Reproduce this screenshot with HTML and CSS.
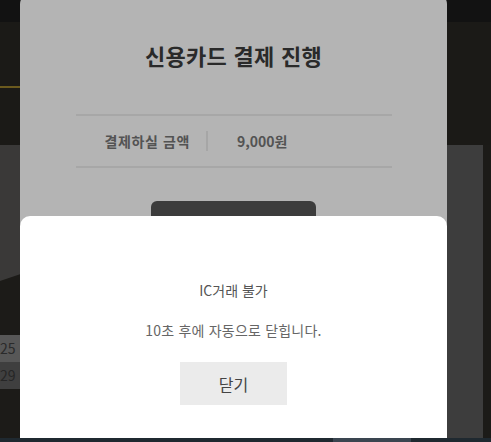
FILE: index.html
```html
<!DOCTYPE html>
<html lang="ko">
<head>
<meta charset="utf-8">
<title>신용카드 결제 진행</title>
<link rel="stylesheet" href="styles.css">
</head>
<body>
<div class="screen">
  <div class="topbar"></div>
  <div class="header"><div class="accent"></div></div>
  <div class="content">
    <div class="left-col">
      <div class="panel-gray"></div>
      <div class="num-row light">25</div>
      <div class="num-row">29</div>
    </div>
    <div class="center-col"></div>
    <div class="right-col"><div class="side-panel"></div></div>
  </div>
  <div class="bottombar"><div class="scroll-thumb"></div></div>

  <section class="sheet">
    <h2 class="sheet-title">신용카드 결제 진행</h2>
    <div class="info-row">
      <span class="info-label">결제하실 금액</span>
      <span class="info-divider"></span>
      <span class="info-value">9,000원</span>
    </div>
    <div class="sheet-button"></div>
  </section>

  <section class="alert">
    <p class="alert-msg">IC거래 불가</p>
    <p class="alert-sub">10초 후에 자동으로 닫힙니다.</p>
    <button class="alert-btn" type="button">닫기</button>
  </section>
</div>
</body>
</html>
```

FILE: styles.css
```css
html, body {
  margin: 0;
  padding: 0;
}
body {
  width: 491px;
  height: 442px;
  overflow: hidden;
  background: #1b1a17;
  font-family: "Noto Sans CJK KR", "Noto Sans", sans-serif;
}
.screen {
  position: relative;
  width: 491px;
  height: 442px;
  display: flex;
  flex-direction: column;
  overflow: hidden;
}
.topbar {
  height: 22px;
  background: #121212;
}
.header {
  height: 123px;
  background: #1b1a17;
}
.accent {
  margin-top: 64px;
  width: 20px;
  height: 2px;
  background: #6b5a1e;
}
.content {
  height: 293px;
  display: flex;
}
.left-col {
  width: 20px;
  background: #1c1b18;
  display: flex;
  flex-direction: column;
}
.panel-gray {
  height: 136px;
  background: #3a3938;
  clip-path: polygon(0 0, 100% 0, 100% 95%, 0 100%);
  margin-bottom: 54px;
}
.num-row {
  height: 27px;
  line-height: 27px;
  background: #3f3f3f;
  color: #262626;
  font-size: 14px;
  text-align: right;
  padding-right: 6px;
  white-space: nowrap;
}
.num-row.light {
  background: #575757;
  color: #2a2a2a;
}
.center-col {
  flex: 1;
}
.right-col {
  width: 44px;
  display: flex;
  background: #1c1b18;
}
.side-panel {
  width: 36px;
  background: #3d3d3d;
}
.bottombar {
  height: 4px;
  background: #1f2930;
}
.scroll-thumb {
  margin-left: 333px;
  width: 78px;
  height: 4px;
  background: #3a4550;
}

.sheet {
  position: absolute;
  left: 20px;
  top: -6px;
  width: 427px;
  height: 240px;
  background: #b4b4b4;
  border-radius: 10px;
  padding-top: 46px;
  box-sizing: border-box;
}
.sheet-title {
  margin: 0;
  font-size: 22px;
  line-height: 30px;
  font-weight: 700;
  color: #2a2a2a;
  text-align: center;
  letter-spacing: 0.3px;
}
.info-row {
  width: 287px;
  height: 50px;
  margin: 44px auto 0;
  border-top: 2px solid #a7a7a7;
  border-bottom: 2px solid #a7a7a7;
  display: flex;
  align-items: center;
  padding-left: 29px;
  font-size: 14px;
  font-weight: 700;
  color: #535353;
}
.info-label {
  letter-spacing: 0.6px;
}
.info-divider {
  width: 2px;
  height: 20px;
  background: #a6a6a6;
  margin: 0 29px 0 16px;
}
.sheet-button {
  width: 165px;
  height: 50px;
  margin: 33px auto 0;
  background: #3c3c3c;
  border-radius: 6px;
}

.alert {
  position: absolute;
  left: 20px;
  top: 216px;
  width: 427px;
  height: 222px;
  background: #ffffff;
  border-radius: 10px 10px 0 0;
  padding-top: 64px;
  box-sizing: border-box;
  text-align: center;
}
.alert-msg,
.alert-sub {
  margin: 0;
  font-size: 14px;
  line-height: 20px;
  color: #555555;
}
.alert-sub {
  margin-top: 20px;
  color: #666666;
  letter-spacing: 0.2px;
}
.alert-btn {
  display: block;
  margin: 22px auto 0;
  width: 107px;
  height: 43px;
  border: none;
  border-radius: 0;
  background: #ebebeb;
  font-family: "Noto Sans CJK KR", "Noto Sans", sans-serif;
  font-size: 16px;
  color: #444444;
  padding: 0;
}
```
